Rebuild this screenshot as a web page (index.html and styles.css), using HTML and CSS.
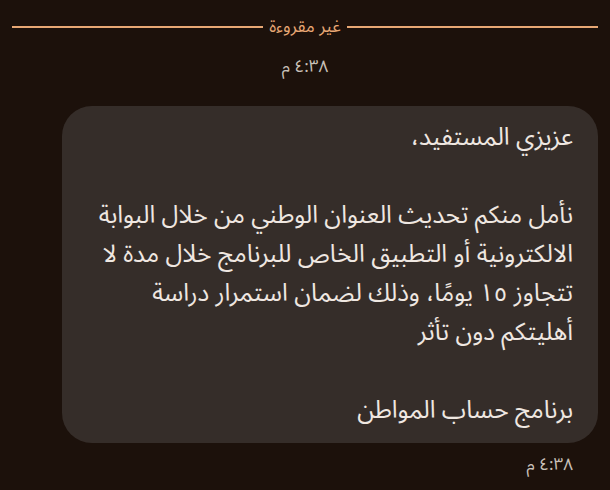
FILE: index.html
```html
<!DOCTYPE html>
<html lang="ar" dir="rtl">
<head>
<meta charset="utf-8">
<link rel="stylesheet" href="styles.css">
</head>
<body>
<div class="screen">
  <div class="divider"><span class="line"></span><span class="label">غير مقروءة</span><span class="line"></span></div>
  <div class="time-center">٤:٣٨ م</div>
  <div class="bubble">
    <p>عزيزي المستفيد،</p>
    <p class="blank">&nbsp;</p>
    <p>نأمل منكم تحديث العنوان الوطني من خلال البوابة الالكترونية أو التطبيق الخاص للبرنامج خلال مدة لا تتجاوز ١٥ يومًا، وذلك لضمان استمرار دراسة أهليتكم دون تأثر</p>
    <p class="blank">&nbsp;</p>
    <p>برنامج حساب المواطن</p>
  </div>
  <div class="time-right">٤:٣٨ م</div>
</div>
</body>
</html>
```
FILE: styles.css
```css
html, body {
  margin: 0;
  padding: 0;
  background: #1c110b;
}
.screen {
  width: 610px;
  height: 490px;
  overflow: hidden;
  font-family: "Noto Sans Arabic", "Noto Sans", "DejaVu Sans", sans-serif;
  box-sizing: border-box;
  padding: 13px 12px 0 12px;
}
.divider {
  display: flex;
  align-items: center;
  gap: 6px;
  height: 28px;
}
.line {
  flex: 1;
  height: 2px;
  background: #e7a774;
}
.label {
  color: #e7a774;
  font-size: 17px;
  line-height: 28px;
}
.time-center {
  text-align: center;
  color: #c9c0b8;
  font-size: 17px;
  line-height: 26px;
  margin-top: 13px;
}
.bubble {
  margin: 26px 0 0 50px;
  background: #352d29;
  border-radius: 30px;
  padding: 12px 25px 13px 30px;
  color: #efe7e1;
  font-size: 24.5px;
  line-height: 39px;
}
.bubble p {
  margin: 0;
}
.time-right {
  color: #c9c0b8;
  font-size: 17px;
  line-height: 24px;
  margin: 10px 25px 0 0;
}
```
